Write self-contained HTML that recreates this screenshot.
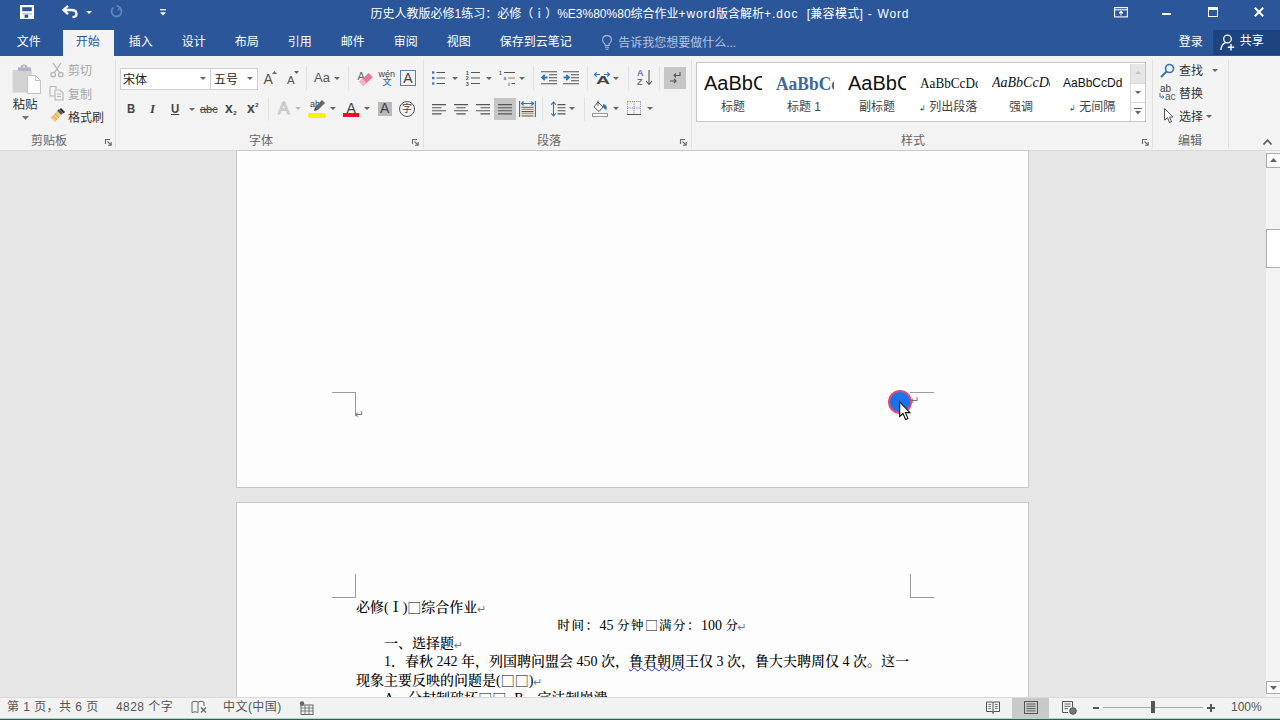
<!DOCTYPE html>
<html lang="zh-CN">
<head>
<meta charset="utf-8">
<title>Word</title>
<style>
*{box-sizing:border-box;margin:0;padding:0}
html,body{width:1280px;height:720px;overflow:hidden;background:#e6e6e6}
body{position:relative;font-family:"Liberation Sans","Noto Sans CJK SC",sans-serif;font-size:12px;color:#444;-webkit-font-smoothing:antialiased}
.abs{position:absolute}
.t{position:absolute;white-space:nowrap;line-height:1}
svg{position:absolute;overflow:visible}
/* title + tabs */
#titlebar{left:0;top:0;width:1280px;height:56px;background:#2b579a}
#title{left:370.5px;top:6px;color:#fff;font-size:12px;line-height:16px}
.la{letter-spacing:0.9px}
.tab{color:#fff;font-size:12px;top:34px;line-height:16px;margin-left:0.7px}
#tabhome{left:63px;top:30px;width:51px;height:27px;background:#f3f3f3}
/* ribbon */
#ribbon{left:0;top:56px;width:1280px;height:95px;background:#f3f3f3;border-bottom:1px solid #dadada}
.gl{color:#666;font-size:12px;top:133.5px;line-height:14px}
.sep{position:absolute;width:1px;background:#e0e0e0}
.lbl{color:#444;font-size:12px;line-height:14px}
.dis{color:#a6a6a6}
/* doc */
#doc{left:0;top:151px;width:1266px;height:546px;background:#e6e6e6}
.page{position:absolute;background:#fdfdfe;border:1px solid #c8c8c8}
.dl{position:absolute;white-space:nowrap;font-family:"Liberation Serif","Noto Serif CJK SC",serif;font-size:14px;line-height:18px;color:#000;font-weight:500}
.pm{color:#777;font-family:"DejaVu Sans",sans-serif;font-size:11px;line-height:1;display:inline-block;height:11px;vertical-align:-1px}
.k{font-size:12.5px;letter-spacing:1.5px;font-weight:500}
.k .sq{font-size:13px;letter-spacing:1px;vertical-align:0.5px;height:13px}
.sq{font-family:"Noto Sans CJK SC",sans-serif;font-weight:300;line-height:1;display:inline-block;height:14px;vertical-align:-1px}
/* status */
#status{left:0;top:697px;width:1280px;height:22px;background:#f2f2f2;border-top:1px solid #d9d9d9}
#green{left:0;top:718px;width:1280px;height:2px;background:#1f6650;border-top:1px solid #b5d2cc}
.st{color:#555;font-size:12px;top:700px;line-height:14px;letter-spacing:0.45px}
</style>
</head>
<body>
<!-- TITLE BAR -->
<div id="titlebar" class="abs"></div>
<div id="title" class="t">历史人教版必修1练习：必修（ⅰ）%E3%80%80综合作业<span class="la">+word</span>版含解析<span class="la">+.doc</span><span style="letter-spacing:5px"> </span><span style="letter-spacing:0.3px">[兼容模式]</span><span style="letter-spacing:1.2px"> - </span><span class="la">Word</span></div>
<div id="tabhome" class="abs"></div>
<div class="t tab" style="left:16px">文件</div>
<div class="t tab" style="left:75px;color:#2b579a">开始</div>
<div class="t tab" style="left:128px">插入</div>
<div class="t tab" style="left:181px">设计</div>
<div class="t tab" style="left:234px">布局</div>
<div class="t tab" style="left:287px">引用</div>
<div class="t tab" style="left:340px">邮件</div>
<div class="t tab" style="left:393px">审阅</div>
<div class="t tab" style="left:446px">视图</div>
<div class="t tab" style="left:499px">保存到云笔记</div>
<div class="t tab" style="left:617.5px;top:35px;color:#b4c4e0;font-size:12px">告诉我您想要做什么...</div>
<div class="t tab" style="left:1178px">登录</div>
<div class="abs" style="left:1213px;top:30px;width:67px;height:25px;background:#1e4480"></div>
<div class="t tab" style="left:1239px;top:33px">共享</div>

<!-- QAT -->
<svg style="left:20px;top:5px" width="14" height="14" viewBox="0 0 14 14"><rect x="0" y="0" width="14" height="14" fill="#fff"/><rect x="2.2" y="2.2" width="9.6" height="4" fill="#2b579a"/><rect x="4.6" y="9.6" width="3.6" height="3.2" fill="#2b579a"/><rect x="2" y="8.4" width="10" height="0.9" fill="#8fa8d0"/></svg>
<svg style="left:62px;top:5px" width="16" height="13" viewBox="0 0 16 13" fill="none" stroke="#fff" stroke-width="2.3"><path d="M1.5 5 H9.5 Q14.5 5 14.5 9 Q14.5 12 10.5 12.2"/><path d="M6 0.8 L1.5 5 L6 9.2" stroke-linejoin="miter"/></svg>
<svg style="left:86px;top:11px" width="6" height="3"><path d="M0 0 L6 0 L3 3 Z" fill="#fff"/></svg>
<svg style="left:110px;top:5px" width="13" height="13" viewBox="0 0 13 13" fill="none" stroke="#5f84c0" stroke-width="1.8"><path d="M9.5 2.5 A5 5 0 1 1 3.5 2.5"/><path d="M6.5 0.5 L9.8 2.3 L8 5.5" stroke-width="1.5"/></svg>
<svg style="left:160px;top:9px" width="6" height="7" viewBox="0 0 6 7"><path d="M0 0.7 H6" stroke="#fff" stroke-width="1.3"/><path d="M0 3.2 L6 3.2 L3 6.5 Z" fill="#fff"/></svg>
<!-- window controls -->
<svg style="left:1114px;top:7px" width="14" height="11" viewBox="0 0 14 11" fill="none" stroke="#fff" stroke-width="1.1"><rect x="0.6" y="0.6" width="12.8" height="9.3"/><path d="M0.6 2.8 H13.4"/><path d="M7 8.5 V4.6 M5 6.4 L7 4.4 L9 6.4"/></svg>
<div class="abs" style="left:1162px;top:13px;width:9px;height:2px;background:#fff"></div>
<div class="abs" style="left:1208px;top:7px;width:10px;height:10px;border:1.2px solid #fff;border-top-width:3px"></div>
<svg style="left:1254px;top:7px" width="10" height="10" viewBox="0 0 10 10" stroke="#fff" stroke-width="2"><path d="M0.8 0.8 L9.2 9.2 M9.2 0.8 L0.8 9.2"/></svg>
<!-- bulb -->
<svg style="left:602px;top:35px" width="10" height="15" viewBox="0 0 10 15" fill="none" stroke="#a9bbd9" stroke-width="1.1"><path d="M3 10.5 V9 Q0.6 7.5 0.6 4.8 Q0.6 0.6 5 0.6 Q9.4 0.6 9.4 4.8 Q9.4 7.5 7 9 V10.5 Z"/><path d="M3 12.3 H7 M3.6 14.2 H6.4"/></svg>
<!-- share person -->
<svg style="left:1220px;top:34px" width="16" height="17" viewBox="0 0 16 17" fill="none" stroke="#fff" stroke-width="1.3"><circle cx="7.5" cy="5" r="3.8"/><path d="M0.8 16 Q1.5 10 5.5 8.6"/><path d="M11 10 V16.5 M7.8 13.2 H14.2" stroke-width="1.4"/></svg>
<!-- RIBBON -->
<div id="ribbon" class="abs"></div>
<!--R1-->
<!-- clipboard group -->
<svg style="left:12px;top:62px" width="30" height="34" viewBox="0 0 30 34">
  <rect x="0.7" y="8" width="19" height="22.5" fill="#d2d2d2"/>
  <path d="M8.5 5.5 Q8.5 2.5 12 2.5 Q15.5 2.5 15.5 5.5 L19 5.5 L19 9 L6 9 L6 5.5 Z" fill="#b4b2c4"/>
  <circle cx="12" cy="4.8" r="1" fill="#e8e8ee"/>
  <path d="M15.5 13.5 L23.5 13.5 L28.5 18.5 L28.5 31.5 L15.5 31.5 Z" fill="#fcfcfc" stroke="#c4c4c4" stroke-width="1"/>
  <path d="M23.5 13.5 L23.5 18.5 L28.5 18.5" fill="none" stroke="#c4c4c4" stroke-width="1"/>
</svg>
<div class="t lbl" style="left:12.5px;top:97.5px;font-size:12.5px;color:#333">粘贴</div>
<svg style="left:22px;top:116px" width="7" height="4"><path d="M0 0 L7 0 L3.5 4 Z" fill="#777"/></svg>
<!-- cut -->
<svg style="left:50px;top:62px" width="14" height="16" viewBox="0 0 14 16" fill="none" stroke="#b3b3b3" stroke-width="1.3">
  <path d="M3 1 L9.5 10.5 M11 1 L4.5 10.5"/><circle cx="3.2" cy="12.6" r="2.3"/><circle cx="10.8" cy="12.6" r="2.3"/>
</svg>
<div class="t lbl dis" style="left:68px;top:64px">剪切</div>
<!-- copy -->
<svg style="left:49px;top:85px" width="16" height="16" viewBox="0 0 16 16" fill="none" stroke="#b3b3b3" stroke-width="1.1">
  <path d="M1 1.5 L7 1.5 L7 4 M1 1.5 L1 11 L5 11"/><path d="M6 5 L11 5 L14 8 L14 15 L6 15 Z"/><path d="M8 9 L12 9 M8 11.5 L12 11.5"/>
</svg>
<div class="t lbl dis" style="left:68px;top:88px">复制</div>
<!-- format painter -->
<svg style="left:49px;top:107px" width="18" height="18" viewBox="0 0 18 18">
  <path d="M10 2 L14 6 L12 8 L8 4 Z" fill="#555"/>
  <path d="M12 1 L16 5 L14.5 6.5 L10.5 2.5 Z" fill="#333"/>
  <path d="M8 4 L12 8 L6 15 L1.5 10.5 Z" fill="#f0c987"/>
  <path d="M4 9 L8 13 M6 7 L10 11" stroke="#d9a550" stroke-width="1"/>
</svg>
<div class="t lbl" style="left:68px;top:110.5px;color:#333">格式刷</div>
<div class="t gl" style="left:31px">剪贴板</div>
<svg style="left:105px;top:139px" width="7" height="7" viewBox="0 0 7 7" fill="none" stroke="#6a6a6a" stroke-width="1.1"><path d="M0.5 5 L0.5 0.5 L5 0.5"/><path d="M2.5 2.5 L6 6 M6.2 3 L6.2 6.2 L3 6.2"/></svg>
<div class="sep" style="left:115px;top:60px;height:88px"></div>

<!-- font group -->
<div class="abs" style="left:120px;top:67.5px;width:91px;height:22px;background:#fff;border:1px solid #d0d0d0"></div>
<div class="t" style="left:123px;top:73px;font-size:12px;color:#222;line-height:14px">宋体</div>
<svg style="left:200px;top:77px" width="6" height="3"><path d="M0 0 L6 0 L3 3 Z" fill="#666"/></svg>
<div class="abs" style="left:210px;top:67.5px;width:48px;height:22px;background:#fff;border:1px solid #d0d0d0"></div>
<div class="t" style="left:214px;top:73px;font-size:12px;color:#222;line-height:14px">五号</div>
<svg style="left:247px;top:77px" width="6" height="3"><path d="M0 0 L6 0 L3 3 Z" fill="#666"/></svg>
<div class="t" style="left:263.5px;top:71.5px;font-size:14px;color:#555;line-height:15px">A</div>
<svg style="left:272px;top:71px" width="5" height="3"><path d="M0 3 L5 3 L2.5 0 Z" fill="#666"/></svg>
<div class="t" style="left:287px;top:73.5px;font-size:11.5px;color:#555;line-height:13px">A</div>
<svg style="left:294px;top:71px" width="5" height="3"><path d="M0 0 L5 0 L2.5 3 Z" fill="#666"/></svg>
<div class="sep" style="left:306px;top:66px;height:24px"></div>
<div class="t" style="left:314px;top:70px;font-size:13px;color:#555;line-height:15px">Aa</div>
<svg style="left:334px;top:77px" width="6" height="3"><path d="M0 0 L6 0 L3 3 Z" fill="#666"/></svg>
<div class="sep" style="left:348px;top:66px;height:24px"></div>
<!-- clear formatting -->
<div class="t" style="left:357.5px;top:70px;font-size:11px;color:#666;line-height:12px">A</div>
<svg style="left:359px;top:72px" width="14" height="14" viewBox="0 0 14 14"><g transform="rotate(-42 7 7.5)"><rect x="0.5" y="4.5" width="13" height="6" rx="1" fill="#e8789a"/><rect x="0.5" y="4.5" width="4.5" height="6" rx="1" fill="#f3b6c6"/></g></svg>
<!-- phonetic guide -->
<div class="t" style="left:378.5px;top:69px;font-size:9px;color:#444;line-height:10px">wén</div>
<div class="t" style="left:382.5px;top:78px;font-size:9px;color:#2e75b6;line-height:9px;font-weight:500">文</div>
<!-- char border -->
<div class="abs" style="left:400px;top:70px;width:16px;height:16px;border:1px solid #5a7fb0"></div>
<div class="t" style="left:403.3px;top:71px;font-size:14px;color:#444;line-height:15px">A</div>

<!-- row 2 -->
<div class="t" style="left:126.5px;top:102px;font-size:12.5px;color:#444;line-height:15px;font-weight:bold;transform:scaleX(0.9);transform-origin:left">B</div>
<div class="t" style="left:150px;top:101px;font-size:13px;color:#444;line-height:15px;font-style:italic;font-family:'Liberation Serif',serif;font-weight:bold">I</div>
<div class="t" style="left:170.5px;top:102px;font-size:12px;color:#444;line-height:15px;text-decoration:underline;font-weight:bold;transform:scaleX(0.95);transform-origin:left">U</div>
<svg style="left:188.5px;top:107.5px" width="5" height="3"><path d="M0 0 L6 0 L3 3 Z" fill="#666"/></svg>
<div class="t" style="left:200px;top:103px;font-size:11px;color:#444;line-height:13px;text-decoration:line-through">abc</div>
<div class="t" style="left:225px;top:100.5px;font-size:14px;color:#444;line-height:15px;font-weight:bold">x<span style="font-size:6px;position:relative;top:2px;left:0.5px">2</span></div>
<div class="t" style="left:247px;top:100.5px;font-size:14px;color:#444;line-height:15px;font-weight:bold">x<span style="font-size:6px;position:relative;top:-6px;left:0.5px">2</span></div>
<div class="sep" style="left:268px;top:97px;height:24px"></div>
<div class="t" style="left:278px;top:99px;font-size:17px;line-height:19px;color:#f3f3f3;-webkit-text-stroke:1px #c4c4c4">A</div>
<svg style="left:295px;top:107px" width="6" height="3"><path d="M0 0 L6 0 L3 3 Z" fill="#bbb"/></svg>
<!-- highlight -->
<div class="t" style="left:310px;top:99px;font-size:9px;color:#444;line-height:10px">ab</div>
<svg style="left:313px;top:100px" width="12" height="12" viewBox="0 0 12 12"><path d="M9 0 L12 3 L5 10 L2 7 Z" fill="#666"/><path d="M2 7 L5 10 L1 11 Z" fill="#444"/></svg>
<div class="abs" style="left:308px;top:112.5px;width:18px;height:5px;background:#f4f400;border-radius:2px"></div>
<svg style="left:330px;top:107px" width="6" height="3"><path d="M0 0 L6 0 L3 3 Z" fill="#666"/></svg>
<!-- font color -->
<div class="t" style="left:346.5px;top:100.5px;font-size:14px;color:#444;line-height:15px">A</div>
<div class="abs" style="left:343px;top:113px;width:16px;height:4px;background:#e81123"></div>
<svg style="left:364px;top:107px" width="6" height="3"><path d="M0 0 L6 0 L3 3 Z" fill="#666"/></svg>
<!-- char shading -->
<div class="abs" style="left:378px;top:102px;width:14px;height:14px;background:#b9b9b9"></div>
<div class="t" style="left:380px;top:101px;font-size:14px;color:#444;line-height:15px">A</div>
<!-- enclosed char -->
<div class="abs" style="left:399px;top:101px;width:16px;height:16px;border:1px solid #555;border-radius:8px"></div>
<div class="t" style="left:402px;top:104px;font-size:10px;color:#444;line-height:10px">字</div>
<div class="t gl" style="left:249px">字体</div>
<svg style="left:412px;top:139px" width="7" height="7" viewBox="0 0 7 7" fill="none" stroke="#6a6a6a" stroke-width="1.1"><path d="M0.5 5 L0.5 0.5 L5 0.5"/><path d="M2.5 2.5 L6 6 M6.2 3 L6.2 6.2 L3 6.2"/></svg>
<div class="sep" style="left:423px;top:60px;height:88px"></div>
<!--/R1-->
<!--R2-->
<!-- paragraph group row 1 -->
<svg style="left:431px;top:69.5px" width="16" height="16" viewBox="0 0 16 16">
  <g fill="#4a78b5"><rect x="1" y="1.3" width="2.4" height="2.4"/><rect x="1" y="6.8" width="2.4" height="2.4"/><rect x="1" y="12.3" width="2.4" height="2.4"/></g>
  <g stroke="#555" stroke-width="1.2"><path d="M5.5 2.5 H14 M5.5 8 H14 M5.5 13.5 H14"/></g>
</svg>
<svg style="left:452px;top:77px" width="6" height="3"><path d="M0 0 L6 0 L3 3 Z" fill="#666"/></svg>
<svg style="left:465px;top:69.5px" width="16" height="16" viewBox="0 0 16 16">
  <g font-family="Liberation Sans" font-size="5.5" fill="#555" font-weight="bold"><text x="0.8" y="4.5">1</text><text x="0.8" y="10">2</text><text x="0.8" y="15.5">3</text></g>
  <g stroke="#555" stroke-width="1.2"><path d="M6 2.5 H15 M6 8 H15 M6 13.5 H15"/></g>
</svg>
<svg style="left:486px;top:77px" width="6" height="3"><path d="M0 0 L6 0 L3 3 Z" fill="#666"/></svg>
<svg style="left:498.5px;top:69.5px" width="17" height="17" viewBox="0 0 17 17">
  <g font-family="Liberation Sans" font-size="5" fill="#555" font-weight="bold"><text x="0" y="4.5">1</text><text x="4.5" y="10" fill="#4a78b5">a</text><text x="9.3" y="15.8">i</text></g>
  <g stroke="#555" stroke-width="1.2"><path d="M5 2.5 H16 M12.5 13.5 H16"/><path d="M9 8 H16" stroke="#b08a5a"/></g>
</svg>
<svg style="left:519px;top:77px" width="6" height="3"><path d="M0 0 L6 0 L3 3 Z" fill="#666"/></svg>
<div class="sep" style="left:533px;top:66px;height:24px"></div>
<svg style="left:541px;top:71px" width="16" height="14" viewBox="0 0 16 14">
  <g stroke="#555" stroke-width="1.1"><path d="M0 0.8 H16 M8 3.8 H16 M8 6.8 H16 M8 9.8 H16 M0 12.8 H16"/></g>
  <path d="M6.5 6.5 H1 M3.8 3.8 L1 6.5 L3.8 9.2" fill="none" stroke="#2e75b6" stroke-width="1.8"/>
</svg>
<svg style="left:563px;top:71px" width="16" height="14" viewBox="0 0 16 14">
  <g stroke="#555" stroke-width="1.1"><path d="M0 0.8 H16 M8 3.8 H16 M8 6.8 H16 M8 9.8 H16 M0 12.8 H16"/></g>
  <path d="M0.5 6.5 H6 M3.2 3.8 L6 6.5 L3.2 9.2" fill="none" stroke="#2e75b6" stroke-width="1.8"/>
</svg>
<div class="sep" style="left:587px;top:66px;height:24px"></div>
<div class="t" style="left:595.5px;top:74.5px;font-size:10.5px;color:#444;line-height:11px;transform:scaleX(1.85);transform-origin:left;font-weight:bold">A</div>
<svg style="left:594px;top:70.5px" width="16" height="7" viewBox="0 0 16 7" fill="none" stroke="#2e75b6" stroke-width="1.2"><path d="M0.5 3.5 H6 M2.7 1.3 L0.5 3.5 L2.7 5.7 M10 3.5 H15.5 M13.3 1.3 L15.5 3.5 L13.3 5.7"/></svg>
<svg style="left:613px;top:77px" width="6" height="3"><path d="M0 0 L6 0 L3 3 Z" fill="#666"/></svg>
<div class="sep" style="left:628px;top:66px;height:24px"></div>
<div class="t" style="left:637px;top:69px;font-size:9px;color:#7a6fb0;line-height:9px;font-weight:bold">A</div>
<div class="t" style="left:637px;top:78px;font-size:9px;color:#707070;line-height:9px;font-weight:bold">Z</div>
<svg style="left:645px;top:70px" width="8" height="16" viewBox="0 0 8 16" fill="none" stroke="#555" stroke-width="1.1"><path d="M4 0 V14 M1 11 L4 14.5 L7 11"/></svg>
<div class="sep" style="left:659px;top:66px;height:24px"></div>
<div class="abs" style="left:664px;top:67px;width:22px;height:22px;background:#c6c6c6"></div>
<svg style="left:669px;top:71px" width="12" height="14" viewBox="0 0 12 14" fill="none" stroke="#555" stroke-width="1.1"><path d="M11 1 V4.5 H5 M7 2.5 L5 4.5 L7 6.5"/><path d="M1 10 H7 M5 8 L7 10 L5 12"/></svg>

<!-- paragraph row 2 -->
<svg style="left:432px;top:104px" width="14" height="11" viewBox="0 0 14 11" stroke="#555" stroke-width="1.1"><path d="M0 0.6 H14 M0 3.7 H9.5 M0 6.8 H14 M0 9.9 H9.5"/></svg>
<svg style="left:454px;top:104px" width="14" height="11" viewBox="0 0 14 11" stroke="#555" stroke-width="1.1"><path d="M0 0.6 H14 M2.3 3.7 H11.7 M0 6.8 H14 M2.3 9.9 H11.7"/></svg>
<svg style="left:476px;top:104px" width="14" height="11" viewBox="0 0 14 11" stroke="#555" stroke-width="1.1"><path d="M0 0.6 H14 M4.5 3.7 H14 M0 6.8 H14 M4.5 9.9 H14"/></svg>
<div class="abs" style="left:494px;top:98px;width:22px;height:22px;background:#c6c6c6"></div>
<svg style="left:498px;top:104px" width="14" height="11" viewBox="0 0 14 11" stroke="#555" stroke-width="1.1"><path d="M0 0.6 H14 M0 3.7 H14 M0 6.8 H14 M0 9.9 H14"/></svg>
<svg style="left:519px;top:100.5px" width="17" height="16" viewBox="0 0 17 16" fill="none">
  <path d="M0.6 0 V16 M16.4 0 V16" stroke="#4a6a9a" stroke-width="1.1"/>
  <path d="M2.5 2.5 H14.5 M4.6 0.5 L2.5 2.5 L4.6 4.5 M12.4 0.5 L14.5 2.5 L12.4 4.5" stroke="#2e75b6" stroke-width="1.2"/>
  <path d="M2.5 6.2 H14.5 M2.5 10.6 H14.5 M2.5 15 H14.5" stroke="#555" stroke-width="1.1"/>
  <path d="M2.5 8.4 H14.5 M2.5 12.8 H14.5" stroke="#b08a5a" stroke-width="1.1"/>
</svg>
<div class="sep" style="left:542px;top:97px;height:24px"></div>
<svg style="left:550px;top:101px" width="16" height="16" viewBox="0 0 16 16" fill="none">
  <path d="M3.5 1 V15 M1.2 3.6 L3.5 1 L5.8 3.6 M1.2 12.4 L3.5 15 L5.8 12.4" stroke="#2e75b6" stroke-width="1.1"/>
  <path d="M7.5 3.6 H15.5 M7.5 6.7 H15.5 M7.5 9.8 H15.5 M7.5 12.9 H15.5" stroke="#555" stroke-width="1.1"/>
</svg>
<svg style="left:569px;top:107px" width="6" height="3"><path d="M0 0 L6 0 L3 3 Z" fill="#666"/></svg>
<div class="sep" style="left:584px;top:97px;height:24px"></div>
<svg style="left:592px;top:100px" width="18" height="18" viewBox="0 0 18 18" fill="none">
  <path d="M6 2 L11 7 L7 11.5 L2 7 Z" fill="#fff" stroke="#555" stroke-width="1"/>
  <path d="M6 0.5 V6" stroke="#555" stroke-width="1"/>
  <path d="M11 4 Q16 5 14.5 10 Q12 9 11 7 Z" fill="#2e75b6"/>
  <rect x="0.5" y="13.5" width="15" height="3" fill="#fff" stroke="#999" stroke-width="1"/>
</svg>
<svg style="left:613px;top:107px" width="6" height="3"><path d="M0 0 L6 0 L3 3 Z" fill="#666"/></svg>
<svg style="left:627px;top:101px" width="14" height="14" viewBox="0 0 14 14" fill="none" stroke="#7a6fb0" stroke-width="1" stroke-dasharray="1 1.2">
  <path d="M0.5 0.5 H13.5 M0.5 0.5 V13 M13.5 0.5 V13 M7 0.5 V13 M0.5 7 H13.5"/>
  <path d="M0 13.5 H14" stroke="#555" stroke-dasharray="none"/>
</svg>
<svg style="left:647px;top:107px" width="6" height="3"><path d="M0 0 L6 0 L3 3 Z" fill="#666"/></svg>
<div class="t gl" style="left:537px">段落</div>
<svg style="left:680px;top:139px" width="7" height="7" viewBox="0 0 7 7" fill="none" stroke="#6a6a6a" stroke-width="1.1"><path d="M0.5 5 L0.5 0.5 L5 0.5"/><path d="M2.5 2.5 L6 6 M6.2 3 L6.2 6.2 L3 6.2"/></svg>
<div class="sep" style="left:691px;top:60px;height:88px"></div>
<!-- styles gallery -->
<div class="abs" style="left:696px;top:62px;width:450px;height:60px;background:#fff;border:1px solid #c6c6c6"></div>
<div class="abs" style="left:1130px;top:64px;width:15px;height:57px;background:#fff;border-left:1px solid #d8d8d8"></div>
<div class="abs" style="left:1131px;top:64px;width:14px;height:19px;background:#e6e6e6"></div>
<div class="abs" style="left:1131px;top:83px;width:14px;height:1px;background:#d8d8d8"></div>
<div class="abs" style="left:1131px;top:102px;width:14px;height:1px;background:#d8d8d8"></div>
<svg style="left:1135px;top:71px" width="6" height="3"><path d="M0 3 L6 3 L3 0 Z" fill="#c0c0c0"/></svg>
<svg style="left:1135px;top:91px" width="6" height="3"><path d="M0 0 L6 0 L3 3 Z" fill="#666"/></svg>
<svg style="left:1134px;top:108px" width="8" height="7"><path d="M0 0.5 H8" stroke="#666"/><path d="M1 3 L7 3 L4 6.5 Z" fill="#666"/></svg>

<div class="t sty" style="left:704px;top:71.7px;font-size:20px;line-height:22px;color:#111;width:58px;overflow:hidden">AaBbC</div>
<div class="t lbl" style="left:721px;top:100px">标题</div>
<div class="t sty" style="left:776px;top:73px;font-size:19px;line-height:22px;color:#3f6797;width:63px;transform:scaleX(0.92);transform-origin:left;overflow:hidden;font-family:'Liberation Serif',serif;font-weight:bold">AaBbCc</div>
<div class="t lbl" style="left:787px;top:100px">标题 1</div>
<div class="t sty" style="left:848px;top:71.7px;font-size:20px;line-height:22px;color:#111;width:58px;overflow:hidden">AaBbC</div>
<div class="t lbl" style="left:859px;top:100px">副标题</div>
<div class="t sty" style="left:920px;top:74.5px;font-size:15px;line-height:17px;color:#111;width:66px;overflow:hidden;font-family:'Liberation Serif',serif;transform:scaleX(0.88);transform-origin:left">AaBbCcDc</div>
<div class="t lbl" style="left:919px;top:100px"><span style="font-size:8px">↲</span> 列出段落</div>
<div class="t sty" style="left:992px;top:74.5px;font-size:14px;line-height:16px;color:#111;width:58px;overflow:hidden;font-family:'Liberation Serif',serif;font-style:italic">AaBbCcDc</div>
<div class="t lbl" style="left:1009px;top:100px">强调</div>
<div class="t sty" style="left:1063px;top:76px;font-size:12px;line-height:14px;color:#111;width:60px;overflow:hidden">AaBbCcDd</div>
<div class="t lbl" style="left:1069px;top:100px"><span style="font-size:8px">↲</span> 无间隔</div>
<div class="t gl" style="left:901px">样式</div>
<svg style="left:1142px;top:139px" width="7" height="7" viewBox="0 0 7 7" fill="none" stroke="#6a6a6a" stroke-width="1.1"><path d="M0.5 5 L0.5 0.5 L5 0.5"/><path d="M2.5 2.5 L6 6 M6.2 3 L6.2 6.2 L3 6.2"/></svg>
<div class="sep" style="left:1152px;top:60px;height:88px"></div>

<!-- editing -->
<svg style="left:1160px;top:63px" width="15" height="15" viewBox="0 0 15 15" fill="none"><circle cx="9.5" cy="5.5" r="4" stroke="#2e75b6" stroke-width="1.6"/><path d="M6.5 8.5 L1 14" stroke="#2e75b6" stroke-width="2"/></svg>
<div class="t lbl" style="left:1179px;top:64px;color:#333">查找</div>
<svg style="left:1212px;top:69px" width="6" height="3"><path d="M0 0 L6 0 L3 3 Z" fill="#666"/></svg>
<div class="t" style="left:1160px;top:84px;font-size:10px;line-height:9px;color:#444">ab</div>
<div class="t" style="left:1165px;top:92px;font-size:10px;line-height:9px;color:#555">ac</div>
<svg style="left:1159px;top:93px" width="6" height="6" viewBox="0 0 6 6" fill="none" stroke="#2e75b6" stroke-width="1"><path d="M1 0 V4 H5 M3.5 2.5 L5 4 L3.5 5.5"/></svg>
<div class="t lbl" style="left:1179px;top:87px;color:#333">替换</div>
<svg style="left:1164px;top:108px" width="10" height="16" viewBox="0 0 10 16"><path d="M0.5 0.5 V12 L3.5 9.5 L5.5 14.5 L7.5 13.5 L5.5 9 L9 9 Z" fill="#fff" stroke="#555" stroke-width="1"/></svg>
<div class="t lbl" style="left:1179px;top:110px;color:#333">选择</div>
<svg style="left:1206px;top:115px" width="6" height="3"><path d="M0 0 L6 0 L3 3 Z" fill="#666"/></svg>
<div class="t gl" style="left:1178px">编辑</div>
<div class="sep" style="left:1228px;top:60px;height:88px"></div>
<svg style="left:1263px;top:139px" width="9" height="6" viewBox="0 0 9 6" fill="none" stroke="#555" stroke-width="1.6"><path d="M0.5 5.5 L4.5 1.2 L8.5 5.5"/></svg>
<!--/R2-->
<!--RIBBON-CONTENT-->

<!-- DOC -->
<div id="doc" class="abs">
  <div class="page" style="left:236px;top:-1px;width:793px;height:338px"></div>
  <div class="page" style="left:236px;top:351px;width:793px;height:300px"></div>
</div>
<!-- page 1 margin marks -->
<div class="abs" style="left:332px;top:392px;width:24px;height:24px;border-top:1px solid #9a9a9a;border-right:1px solid #9a9a9a"></div>
<div class="abs" style="left:910px;top:392px;width:24px;height:1px;background:#9a9a9a"></div>
<div class="t pm" style="left:355px;top:409px">↵</div>
<div class="t pm" style="left:910.5px;top:394.5px">↵</div>
<!-- cursor highlight -->
<div class="abs" style="left:888px;top:390px;width:23.5px;height:23.5px;border-radius:12px;background:#1a73e8;border:2px solid #de4a76"></div>
<svg style="left:899px;top:401px" width="13" height="20" viewBox="0 0 13 20"><path d="M0.7 0.8 V15.5 L4 12.5 L6.6 18.5 L9 17.4 L6.4 11.6 L11 11.6 Z" fill="#fff" stroke="#111" stroke-width="1.1"/></svg>
<!-- page 2 margin marks -->
<div class="abs" style="left:332px;top:574px;width:24px;height:24px;border-bottom:1px solid #9a9a9a;border-right:1px solid #9a9a9a"></div>
<div class="abs" style="left:910px;top:574px;width:24px;height:24px;border-bottom:1px solid #9a9a9a;border-left:1px solid #9a9a9a"></div>
<!-- doc text -->
<div class="abs" id="doctext" style="left:237px;top:504px;width:791px;height:193px;overflow:hidden">
  <div class="dl" style="left:119px;top:95px">必修(Ⅰ)<span class="sq">□</span>综合作业<span class="pm">↵</span></div>
  <div class="dl" style="left:320.5px;top:113px;font-weight:400"><span class="k">时间：</span>45 <span class="k">分钟<span class="sq">□</span>满分：</span>100 <span class="k">分</span><span class="pm" style="margin-left:-2px">↵</span></div>
  <div class="dl" style="left:147px;top:131px">一、选择题<span class="pm">↵</span></div>
  <div class="dl" style="left:147px;top:149px">1．春秋 242 年，列国聘问盟会 450 次，<span style="text-decoration:underline wavy #3030c8 1px;text-underline-offset:1px">鲁君朝周</span>王仅 3 次，鲁大夫聘周仅 4 次。这一</div>
  <div class="dl" style="left:119px;top:168px">现象主要反映的问题是(<span class="sq">□</span><span class="sq">□</span>)<span class="pm">↵</span></div>
  <div class="dl" style="left:147px;top:186px">A．分封制破坏<span class="sq">□</span><span class="sq">□</span><span style="margin-left:8px">B</span>．宗法制崩溃<span class="pm">↵</span></div>
</div>
<!--DOC-CONTENT-->

<!-- SCROLLBAR -->
<div class="abs" style="left:1266px;top:151px;width:14px;height:546px;background:#f3f3f3"></div>
<div class="abs" style="left:1266px;top:153px;width:16px;height:15px;background:#fff;border:1px solid #ababab"></div>
<svg style="left:1270px;top:158px" width="7" height="4"><path d="M0 4 L7 4 L3.5 0 Z" fill="#666"/></svg>
<div class="abs" style="left:1266px;top:229px;width:16px;height:39px;background:#fff;border:1px solid #ababab"></div>
<div class="abs" style="left:1266px;top:681px;width:16px;height:13px;background:#fff;border:1px solid #ababab"></div>
<svg style="left:1270px;top:686px" width="7" height="4"><path d="M0 0 L7 0 L3.5 4 Z" fill="#666"/></svg>
<!--SCROLL-CONTENT-->

<!-- STATUS -->
<div id="status" class="abs"></div>
<div id="green" class="abs"></div>
<div class="t st" style="left:7px">第 1 页，共 6 页</div>
<div class="t st" style="left:116px">4828 个字</div>
<svg style="left:191px;top:700px" width="16" height="14" viewBox="0 0 16 14" fill="none" stroke="#666" stroke-width="1"><path d="M1 2 Q4 0.5 7 2 V12.5 Q4 11 1 12.5 Z"/><path d="M7 2 Q10 0.5 13 2 V6"/><path d="M10 7.5 L15 12.5 M15 7.5 L10 12.5" stroke-width="1.3"/></svg>
<div class="t st" style="left:223px">中文(中国)</div>
<svg style="left:299px;top:700.5px" width="15" height="14" viewBox="0 0 15 14"><circle cx="3" cy="2.5" r="2.2" fill="#666"/><rect x="2" y="4" width="12" height="9.5" fill="none" stroke="#666"/><path d="M2 7 H14 M2 10 H14 M6 4 V13 M10 4 V13" stroke="#666" stroke-width="0.8"/></svg>
<!-- view buttons -->
<svg style="left:986px;top:701px" width="14" height="13" viewBox="0 0 14 13" fill="none" stroke="#555" stroke-width="1"><path d="M0.5 1 H6 Q7 1 7 2 Q7 1 8 1 H13.5 V10.5 H8 Q7 10.5 7 11.5 Q7 10.5 6 10.5 H0.5 Z M7 2 V13"/><path d="M2.5 3.5 H5 M2.5 5.5 H5 M2.5 7.5 H5 M9 3.5 H11.5 M9 5.5 H11.5 M9 7.5 H11.5" stroke-width="0.8"/></svg>
<div class="abs" style="left:1012px;top:698px;width:37px;height:20px;background:#c9c9c9"></div>
<svg style="left:1024px;top:701px" width="14" height="13" viewBox="0 0 14 13" fill="none" stroke="#555" stroke-width="1"><rect x="0.5" y="0.5" width="13" height="12"/><path d="M2.5 3 H11.5 M2.5 5.3 H11.5 M2.5 7.6 H11.5 M2.5 9.9 H11.5" stroke-width="0.9"/></svg>
<svg style="left:1062px;top:701px" width="16" height="14" viewBox="0 0 16 14" fill="none" stroke="#555" stroke-width="1"><path d="M0.5 0.5 H10.5 V6 M0.5 0.5 V11.5 H6"/><path d="M2.5 3 H8.5 M2.5 5.3 H8.5 M2.5 7.6 H6" stroke-width="0.9"/><circle cx="11" cy="10" r="3.3" fill="#777"/></svg>
<div class="abs" style="left:1093px;top:707px;width:6px;height:2px;background:#555"></div>
<div class="abs" style="left:1103px;top:707px;width:100px;height:1px;background:#aaa"></div>
<div class="abs" style="left:1151px;top:701px;width:4px;height:12px;background:#555"></div>
<div class="abs" style="left:1207px;top:707px;width:8px;height:2px;background:#555"></div>
<div class="abs" style="left:1210px;top:704px;width:2px;height:8px;background:#555"></div>
<div class="t st" style="left:1231px;letter-spacing:0">100%</div>
<!--STATUS-CONTENT-->
</body>
</html>
